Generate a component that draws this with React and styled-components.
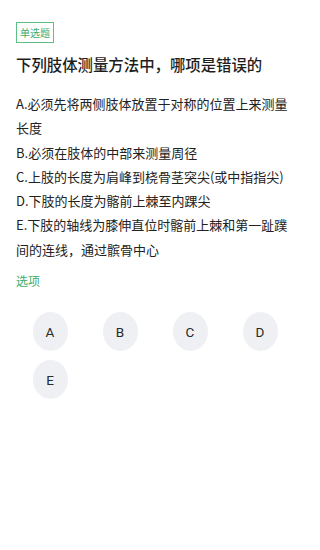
import styled, { createGlobalStyle } from 'styled-components'

const GlobalStyle = createGlobalStyle`
    body {
        margin: 0;
        background: #ffffff;
        font-family: "Noto Sans CJK SC", "Noto Sans", sans-serif;
    }
`

const Page = styled.div`
    width: 309px;
    min-height: 550px;
    box-sizing: border-box;
    padding: 22px 15px 0 16px;
    background: #fff;
`

const TypeTag = styled.div`
    display: flex;
    width: fit-content;
    align-items: center;
    justify-content: center;
    height: 21px;
    padding: 0 3px;
    box-sizing: border-box;
    border: 1px solid #5cbf86;
    color: #3eac6c;
    font-size: 10px;
    line-height: 1;
`

const Title = styled.h1`
    margin: 10px 0 0 0;
    font-size: 15.4px;
    line-height: 22px;
    font-weight: 500;
    color: #1e1e1e;
`

const OptionList = styled.div`
    margin-top: 17px;
    display: flex;
    flex-direction: column;
`

const OptionText = styled.p`
    margin: 0;
    font-size: 13px;
    line-height: 24.3px;
    color: #222;
`

const SectionLabel = styled.div`
    margin-top: 9px;
    font-size: 12px;
    line-height: 20px;
    color: #3eac6c;
`

const ChoiceGrid = styled.div`
    margin: 21px -1px 0 -1px;
    display: grid;
    grid-template-columns: repeat(4, 1fr);
    row-gap: 9px;
`

const ChoiceButton = styled.div`
    justify-self: center;
    width: 35px;
    height: 39px;
    border-radius: 50%;
    background: #eef0f3;
    display: flex;
    align-items: center;
    justify-content: center;
    font-family: Roboto, "Noto Sans", sans-serif;
    font-size: 13.5px;
    color: #2a2a2a;
`

const options = [
    'A.必须先将两侧肢体放置于对称的位置上来测量长度',
    'B.必须在肢体的中部来测量周径',
    'C.上肢的长度为肩峰到桡骨茎突尖(或中指指尖)',
    'D.下肢的长度为髂前上棘至内踝尖',
    'E.下肢的轴线为膝伸直位时髂前上棘和第一趾蹼间的连线，通过髌骨中心',
]

export default function App() {
    return (
        <>
            <GlobalStyle />
            <Page>
                <TypeTag>单选题</TypeTag>
                <Title>下列肢体测量方法中，哪项是错误的</Title>
                <OptionList>
                    {options.map((o) => (
                        <OptionText key={o}>{o}</OptionText>
                    ))}
                </OptionList>
                <SectionLabel>选项</SectionLabel>
                <ChoiceGrid>
                    {['A', 'B', 'C', 'D', 'E'].map((l) => (
                        <ChoiceButton key={l}>{l}</ChoiceButton>
                    ))}
                </ChoiceGrid>
            </Page>
        </>
    )
}
